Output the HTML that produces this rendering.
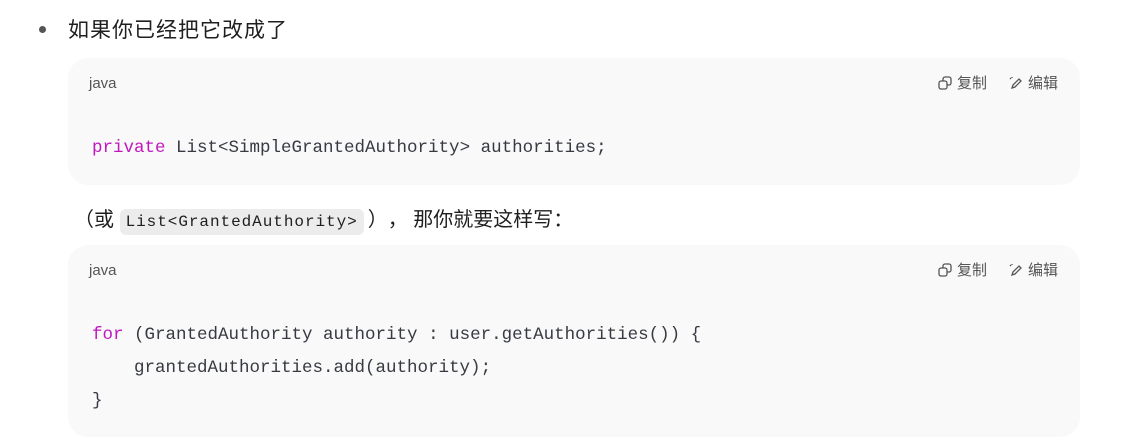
<!DOCTYPE html>
<html><head><meta charset="utf-8"><style>
body{margin:0;background:#fff;width:1137px;height:447px;overflow:hidden;position:relative;font-family:"Liberation Sans","Noto Sans CJK SC",sans-serif;color:#1f1f1f}
.abs{position:absolute;white-space:pre}
.dot{position:absolute;left:39px;top:26px;width:7px;height:7px;border-radius:50%;background:#555}
.block{position:absolute;left:68px;width:1012px;background:#f9f9f9;border-radius:20px}
.lang{position:absolute;left:21px;top:17px;font-size:15px;color:#555;font-family:"Liberation Sans",sans-serif}
.tools{position:absolute;right:22px;top:14px;font-size:15px;color:#555;font-family:"Liberation Sans","Noto Sans CJK SC",sans-serif;display:flex;gap:22px;align-items:center}
.tools span{display:flex;align-items:center;gap:5px}
.code{position:absolute;left:24px;font-family:"Liberation Mono",monospace;font-size:17.5px;color:#383a42;line-height:33px;white-space:pre}
.kw{color:#c018c0}
.ic{background:#ececec;border-radius:6px;font-family:"Liberation Mono",monospace;font-size:16px;letter-spacing:0.95px;padding:4px 6px}
.fw{display:inline-block;width:20px;text-align:center}
</style></head><body>
<div class="dot"></div>
<div class="abs" style="left:68px;top:14px;font-size:21px;letter-spacing:1px">如果你已经把它改成了</div>
<div class="block" style="top:58px;height:127px">
 <div class="lang">java</div>
 <div class="tools"><span><svg width="14" height="14" viewBox="0 0 14 14" fill="none" stroke="#555" stroke-width="1.3"><rect x="1" y="5" width="8" height="8" rx="2"/><path d="M5 5V3a2 2 0 0 1 2-2h4a2 2 0 0 1 2 2v4a2 2 0 0 1-2 2H9"/></svg>复制</span><span><svg width="14" height="14" viewBox="0 0 14 14" fill="none" stroke="#555" stroke-width="1.3"><path d="M3 12l1-3 6-6 2 2-6 6z"/><path d="M1 2l1 1M3 1v1"/></svg>编辑</span></div>
 <div class="code" style="top:74px"><span class="kw">private</span> List&lt;SimpleGrantedAuthority&gt; authorities;</div>
</div>
<div class="abs" style="left:74px;top:203px;font-size:20px"><span class="fw">（</span>或 <span class="ic">List&lt;GrantedAuthority&gt;</span><span class="fw" style="margin-left:4px">）</span><span class="fw">，</span> 那你就要这样写：</div>
<div class="block" style="top:245px;height:192px">
 <div class="lang">java</div>
 <div class="tools"><span><svg width="14" height="14" viewBox="0 0 14 14" fill="none" stroke="#555" stroke-width="1.3"><rect x="1" y="5" width="8" height="8" rx="2"/><path d="M5 5V3a2 2 0 0 1 2-2h4a2 2 0 0 1 2 2v4a2 2 0 0 1-2 2H9"/></svg>复制</span><span><svg width="14" height="14" viewBox="0 0 14 14" fill="none" stroke="#555" stroke-width="1.3"><path d="M3 12l1-3 6-6 2 2-6 6z"/><path d="M1 2l1 1M3 1v1"/></svg>编辑</span></div>
 <div class="code" style="top:74px"><span class="kw">for</span> (GrantedAuthority authority : user.getAuthorities()) {
    grantedAuthorities.add(authority);
}</div>
</div>
</body></html>
